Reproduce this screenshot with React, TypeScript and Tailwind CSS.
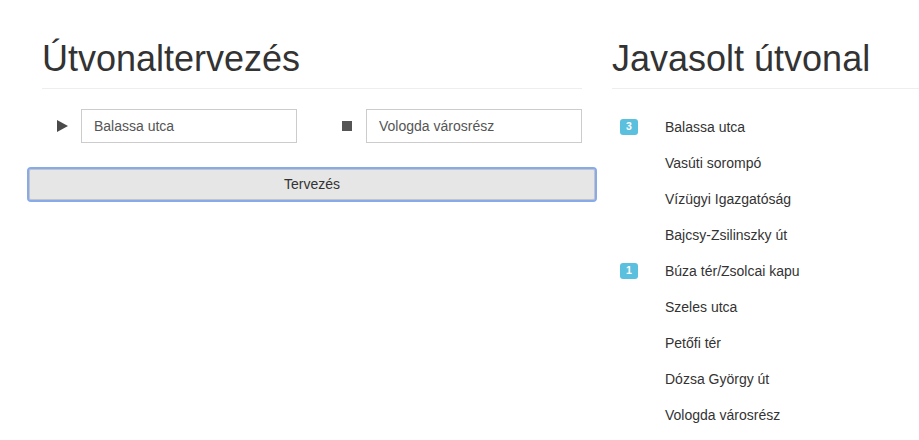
import React from "react";

const stops: { name: string; badge?: string }[] = [
  { name: "Balassa utca", badge: "3" },
  { name: "Vasúti sorompó" },
  { name: "Vízügyi Igazgatóság" },
  { name: "Bajcsy-Zsilinszky út" },
  { name: "Búza tér/Zsolcai kapu", badge: "1" },
  { name: "Szeles utca" },
  { name: "Petőfi tér" },
  { name: "Dózsa György út" },
  { name: "Vologda városrész" },
];

function PageHeader({ title }: { title: string }) {
  return (
    <div className="mt-[39px] border-b border-[#eee] pb-[9px]">
      <h1 className="text-[36px] leading-[39.6px] font-normal text-[#333]">{title}</h1>
    </div>
  );
}

export default function App() {
  return (
    <div className="w-[919px] h-[440px] overflow-hidden bg-white font-['Liberation_Sans',Arial,sans-serif] text-[14px] leading-[20px] text-[#333]">
      <div className="flex pl-[27px]">
        {/* Útvonaltervezés */}
        <div className="w-[570px] shrink-0 flex flex-col">
          <div className="px-[15px]">
            <PageHeader title="Útvonaltervezés" />
            <div className="mt-[20px] flex items-center pl-[15px]">
              <svg width="11" height="12" viewBox="0 0 11 12" className="mr-[13px] shrink-0">
                <polygon points="0,0 11,6 0,12" fill="#4a4a4a" />
              </svg>
              <input
                readOnly
                value="Balassa utca"
                className="w-[216px] h-[34px] border border-[#ccc] px-[12px] text-[14px] text-[#555] outline-none"
              />
              <div className="ml-[45px] mr-[14px] w-[10px] h-[10px] bg-[#555] shrink-0" />
              <input
                readOnly
                value="Vologda városrész"
                className="w-[216px] h-[34px] border border-[#ccc] px-[12px] text-[14px] text-[#555] outline-none"
              />
            </div>
          </div>
          <button className="mt-[24px] w-full h-[35px] rounded-[4px] border-2 border-[#86aaea] bg-[#e6e6e6] text-[14px] text-[#333] shadow-[inset_0_0_0_1px_#c4c4c4]">
            Tervezés
          </button>
        </div>

        {/* Javasolt útvonal */}
        <div className="w-[570px] shrink-0 px-[15px]">
          <PageHeader title="Javasolt útvonal" />
          <div className="mt-[20px] flex flex-col">
            {stops.map((s) => (
              <div key={s.name} className="flex h-[36px] items-center">
                <div className="w-[45px] pl-[8px] flex items-center">
                  {s.badge && (
                    <span className="flex w-[18px] h-[16px] items-center justify-center rounded-[3px] bg-[#5bc0de] text-[10.5px] leading-none font-bold text-white">
                      {s.badge}
                    </span>
                  )}
                </div>
                <div className="pl-[8px]">{s.name}</div>
              </div>
            ))}
          </div>
        </div>
      </div>
    </div>
  );
}
